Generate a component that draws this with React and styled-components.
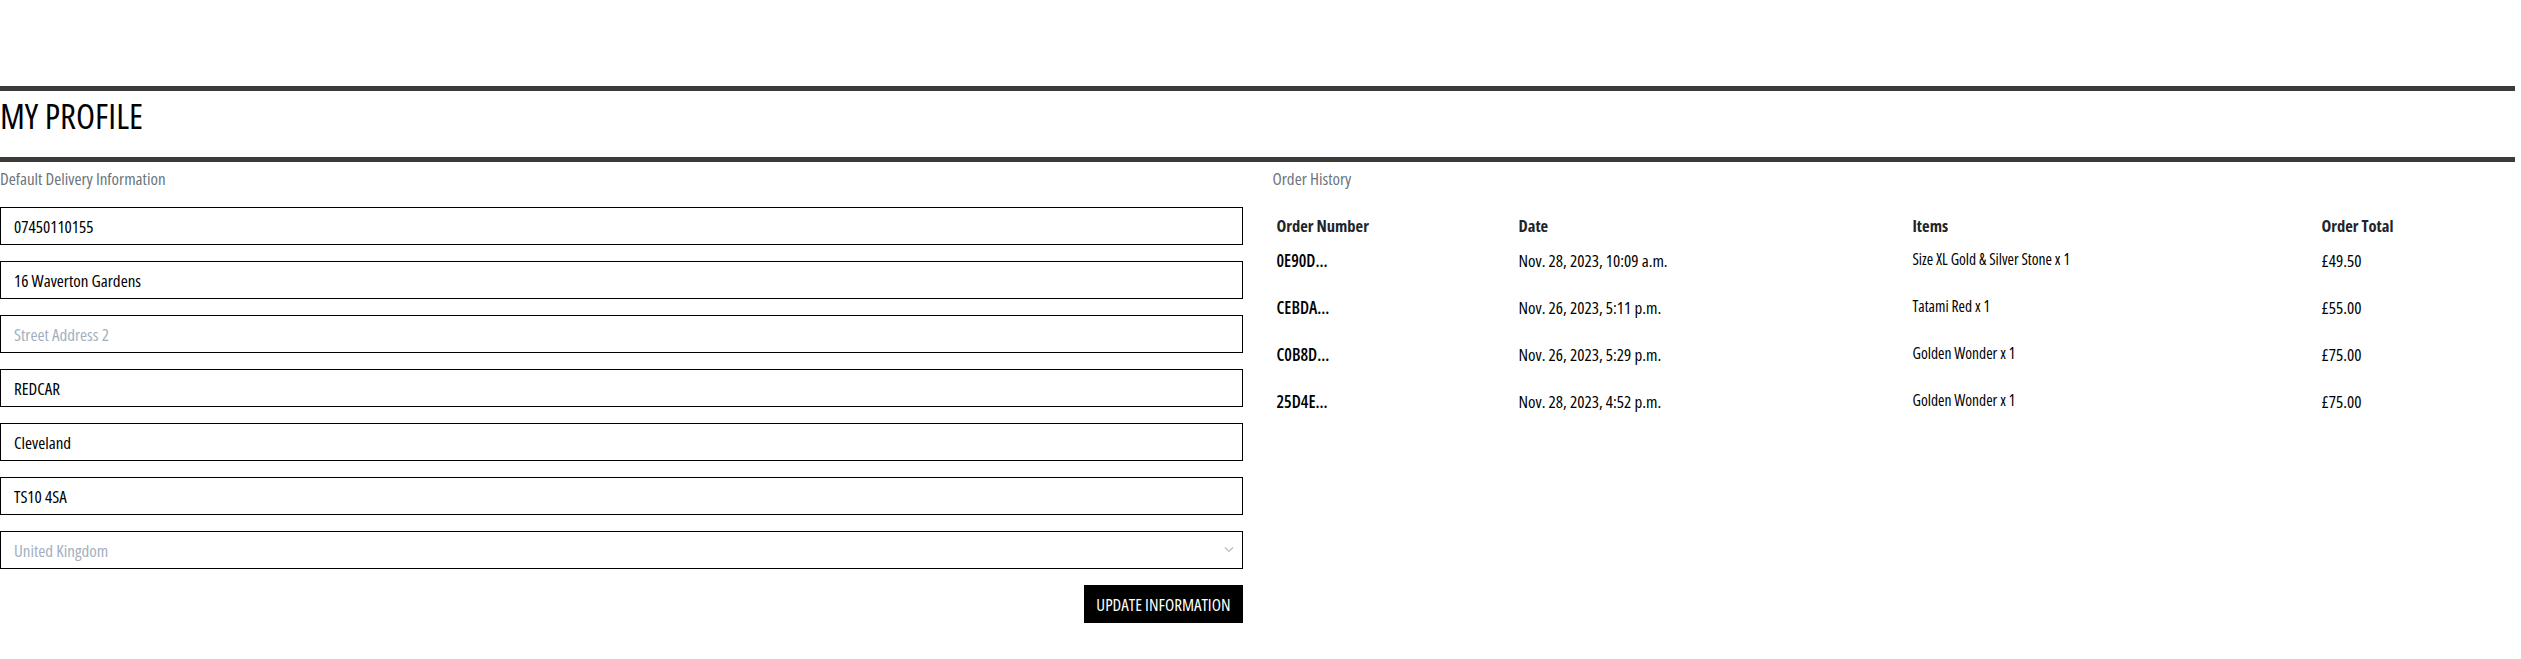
import React from "react";
import styled, { createGlobalStyle } from "styled-components";

const GlobalStyle = createGlobalStyle`
  body {
    margin: 0;
    background: #fff;
    color: #000;
    font-family: "Open Sans", "Roboto Condensed", sans-serif;
    font-stretch: 75%;
    font-size: 17px;
  }
  * { box-sizing: border-box; }
`;

const Page = styled.main`
  padding: 86px 6px 30px 0;
`;

const Rule = styled.hr`
  margin: 0;
  border: 0;
  height: 5px;
  background: #3b3b3b;
`;

const Title = styled.h1`
  margin: 0;
  padding: 5px 0 21px;
  font-size: 35px;
  line-height: 40px;
  font-weight: 450;
  color: #000;
`;

const Columns = styled.div`
  display: grid;
  grid-template-columns: 1fr 1fr;
  column-gap: 30px;
`;

const Column = styled.section`
  display: flex;
  flex-direction: column;
`;

const SectionLabel = styled.p`
  margin: 5px 0 16px;
  font-size: 17px;
  line-height: 24px;
  color: #6c757d;
`;

const Form = styled.form`
  display: flex;
  flex-direction: column;
  gap: 16px;
`;

const Field = styled.input`
  width: 100%;
  height: 38px;
  padding: 0 13px;
  border: 1px solid #000;
  border-radius: 0;
  font: inherit;
  font-size: 17px;
  font-weight: 500;
  color: #000;
  background: #fff;
  outline: none;

  &::placeholder {
    color: #a3afbf;
    font-weight: 400;
  }
`;

const SelectWrap = styled.div`
  position: relative;
`;

const Select = styled.select`
  width: 100%;
  height: 38px;
  padding: 0 13px;
  border: 1px solid #000;
  border-radius: 0;
  font: inherit;
  font-size: 17px;
  color: #a3afbf;
  background: #fff;
  appearance: none;
  outline: none;
`;

const Chevron = styled.svg`
  position: absolute;
  right: 9px;
  top: 15px;
  width: 10px;
  height: 7px;
  pointer-events: none;
`;

const Actions = styled.div`
  display: flex;
  justify-content: flex-end;
`;

const Button = styled.button`
  height: 38px;
  padding: 0 12px;
  border: 0;
  border-radius: 0;
  background: #000;
  color: #fff;
  font: inherit;
  font-size: 17px;
  font-weight: 500;
  text-transform: uppercase;
`;

const Table = styled.table`
  width: 100%;
  border-collapse: collapse;
  table-layout: fixed;
`;

const Col = styled.col`
  width: ${(p) => p.$w};
`;

const Th = styled.th`
  padding: 7px 4px 11px;
  text-align: left;
  font-size: 16.5px;
  line-height: 24px;
  font-weight: 700;
  color: #212529;
`;

const Td = styled.td`
  padding: 0 4px 23px;
  vertical-align: top;
  font-size: ${(p) => (p.$small ? "15.5px" : "17px")};
  line-height: ${(p) => (p.$small ? "21px" : "24px")};
  font-weight: ${(p) => (p.$strong ? 600 : 500)};
  color: #000;
  white-space: nowrap;
`;

const orders = [
  { id: "0E90D...", date: "Nov. 28, 2023, 10:09 a.m.", items: "Size XL Gold & Silver Stone x 1", total: "£49.50" },
  { id: "CEBDA...", date: "Nov. 26, 2023, 5:11 p.m.", items: "Tatami Red x 1", total: "£55.00" },
  { id: "C0B8D...", date: "Nov. 26, 2023, 5:29 p.m.", items: "Golden Wonder x 1", total: "£75.00" },
  { id: "25D4E...", date: "Nov. 28, 2023, 4:52 p.m.", items: "Golden Wonder x 1", total: "£75.00" },
];

export default function App() {
  return (
    <>
      <GlobalStyle />
      <Page>
        <Rule />
        <Title>MY PROFILE</Title>
        <Rule />
        <Columns>
          <Column>
            <SectionLabel>Default Delivery Information</SectionLabel>
            <Form onSubmit={(e) => e.preventDefault()}>
              <Field defaultValue="07450110155" placeholder="Phone Number" />
              <Field defaultValue="16 Waverton Gardens" placeholder="Street Address 1" />
              <Field placeholder="Street Address 2" />
              <Field defaultValue="REDCAR" placeholder="Town or City" />
              <Field defaultValue="Cleveland" placeholder="County" />
              <Field defaultValue="TS10 4SA" placeholder="Postcode" />
              <SelectWrap>
                <Select defaultValue="GB">
                  <option value="GB">United Kingdom</option>
                </Select>
                <Chevron viewBox="0 0 10 7">
                  <path d="M1 1.5 L5 5.5 L9 1.5" fill="none" stroke="#b4bcc8" strokeWidth="1.2" />
                </Chevron>
              </SelectWrap>
              <Actions>
                <Button type="submit">Update Information</Button>
              </Actions>
            </Form>
          </Column>
          <Column>
            <SectionLabel>Order History</SectionLabel>
            <Table>
              <colgroup>
                <Col $w="242px" />
                <Col $w="394px" />
                <Col $w="409px" />
                <Col $w="auto" />
              </colgroup>
              <thead>
                <tr>
                  <Th>Order Number</Th>
                  <Th>Date</Th>
                  <Th>Items</Th>
                  <Th>Order Total</Th>
                </tr>
              </thead>
              <tbody>
                {orders.map((o) => (
                  <tr key={o.id + o.date}>
                    <Td $strong>{o.id}</Td>
                    <Td>{o.date}</Td>
                    <Td $small>{o.items}</Td>
                    <Td>{o.total}</Td>
                  </tr>
                ))}
              </tbody>
            </Table>
          </Column>
        </Columns>
      </Page>
    </>
  );
}
